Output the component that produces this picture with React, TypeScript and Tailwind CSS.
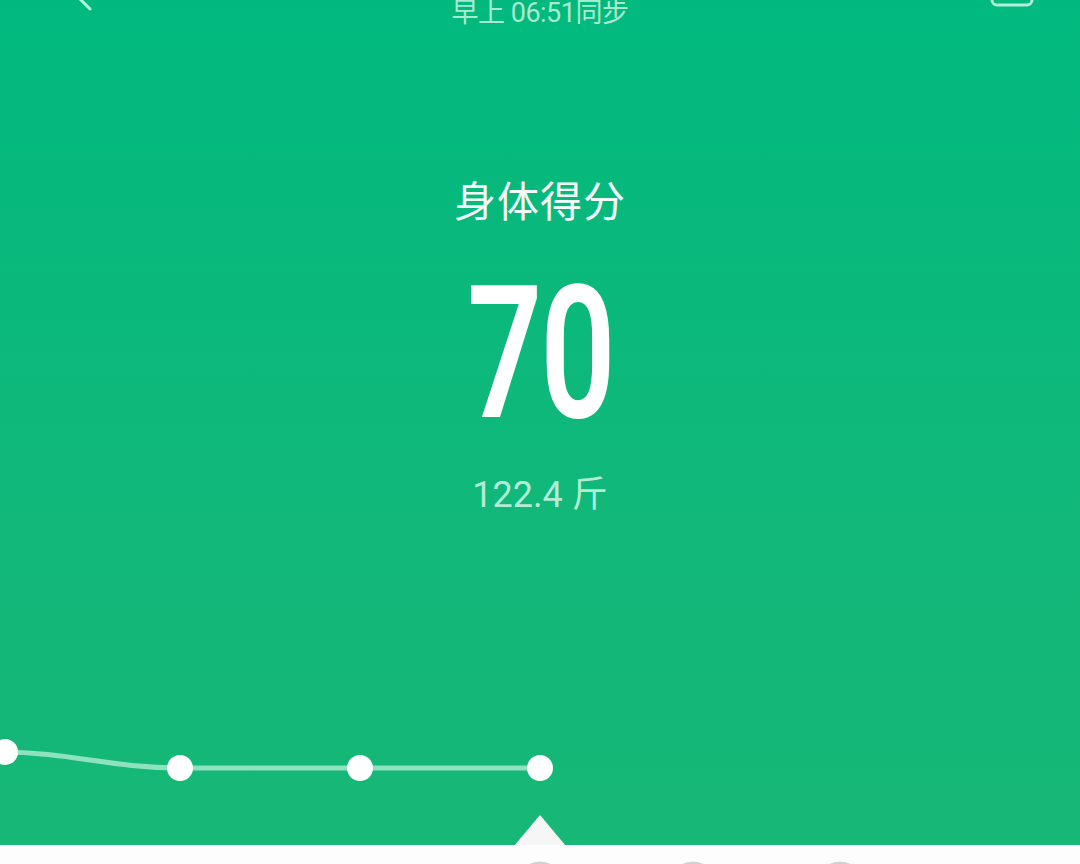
import React from 'react'

const points = [
  { x: 5, y: 52 },
  { x: 180, y: 68 },
  { x: 360, y: 68 },
  { x: 540, y: 68 },
]

function TrendChart() {
  return (
    <svg width="1080" height="145" viewBox="0 0 1080 145" className="block shrink-0">
      <path
        d="M0 52 C 70 52, 110 68, 180 68 L 540 68"
        fill="none"
        stroke="#8fe2c0"
        strokeWidth="5"
        strokeLinecap="round"
      />
      {points.map((p) => (
        <circle key={p.x} cx={p.x} cy={p.y} r="13" fill="#ffffff" />
      ))}
      {/* selected marker */}
      <polygon points="514,146 540,115 566,146" fill="#f6f6f6" />
    </svg>
  )
}

export default function App() {
  return (
    <div
      className="flex h-[864px] w-[1080px] flex-col overflow-hidden bg-[#fdfdfd]"
      style={{ fontFamily: 'Roboto, "Noto Sans CJK SC", sans-serif' }}
    >
      {/* Green score panel */}
      <div className="flex h-[845px] shrink-0 flex-col bg-gradient-to-b from-[#01b97e] to-[#17b777]">
        {/* Header */}
        <div className="grid h-[26px] grid-cols-[1fr_auto_1fr] items-start">
          <div className="flex">
            <svg width="30" height="12" viewBox="0 0 30 12" className="ml-[68px] overflow-visible">
              <path d="M22 -27 L4 -9 L22 9" fill="none" stroke="#b6efd8" strokeWidth="3" strokeLinecap="round" strokeLinejoin="round" />
            </svg>
          </div>
          <div className="text-[27px] leading-[26px] tracking-[-0.5px] text-[#a8ead0]">
            早上 06:51同步
          </div>
          <div className="flex justify-end">
            <svg width="48" height="10" viewBox="0 0 48 10" className="mr-[44px] overflow-visible">
              <rect x="4" y="-30" width="40" height="35" rx="5" fill="none" stroke="#b4eed7" strokeWidth="3" />
            </svg>
          </div>
        </div>

        {/* Score */}
        <div className="mt-[154px] flex flex-col items-center text-white">
          <div className="text-[42px] leading-[46px] tracking-[1px] text-[#f3fcf8]">身体得分</div>
          <div className="mt-[47px] scale-x-[0.71] text-[186px] font-semibold leading-[160px] tracking-[-3px]">
            70
          </div>
          <div className="mt-[42px] text-[36px] leading-[40px] text-[#b2ecd6]">122.4 斤</div>
        </div>

        <div className="flex-1" />
        <TrendChart />
      </div>

      {/* Day selector peeking in */}
      <svg width="1080" height="19" viewBox="0 0 1080 19" className="block shrink-0">
        {[540, 693, 840].map((cx) => (
          <circle key={cx} cx={cx} cy="40" r="22" fill="none" stroke="#d2d2d2" strokeWidth="3" />
        ))}
      </svg>
    </div>
  )
}
